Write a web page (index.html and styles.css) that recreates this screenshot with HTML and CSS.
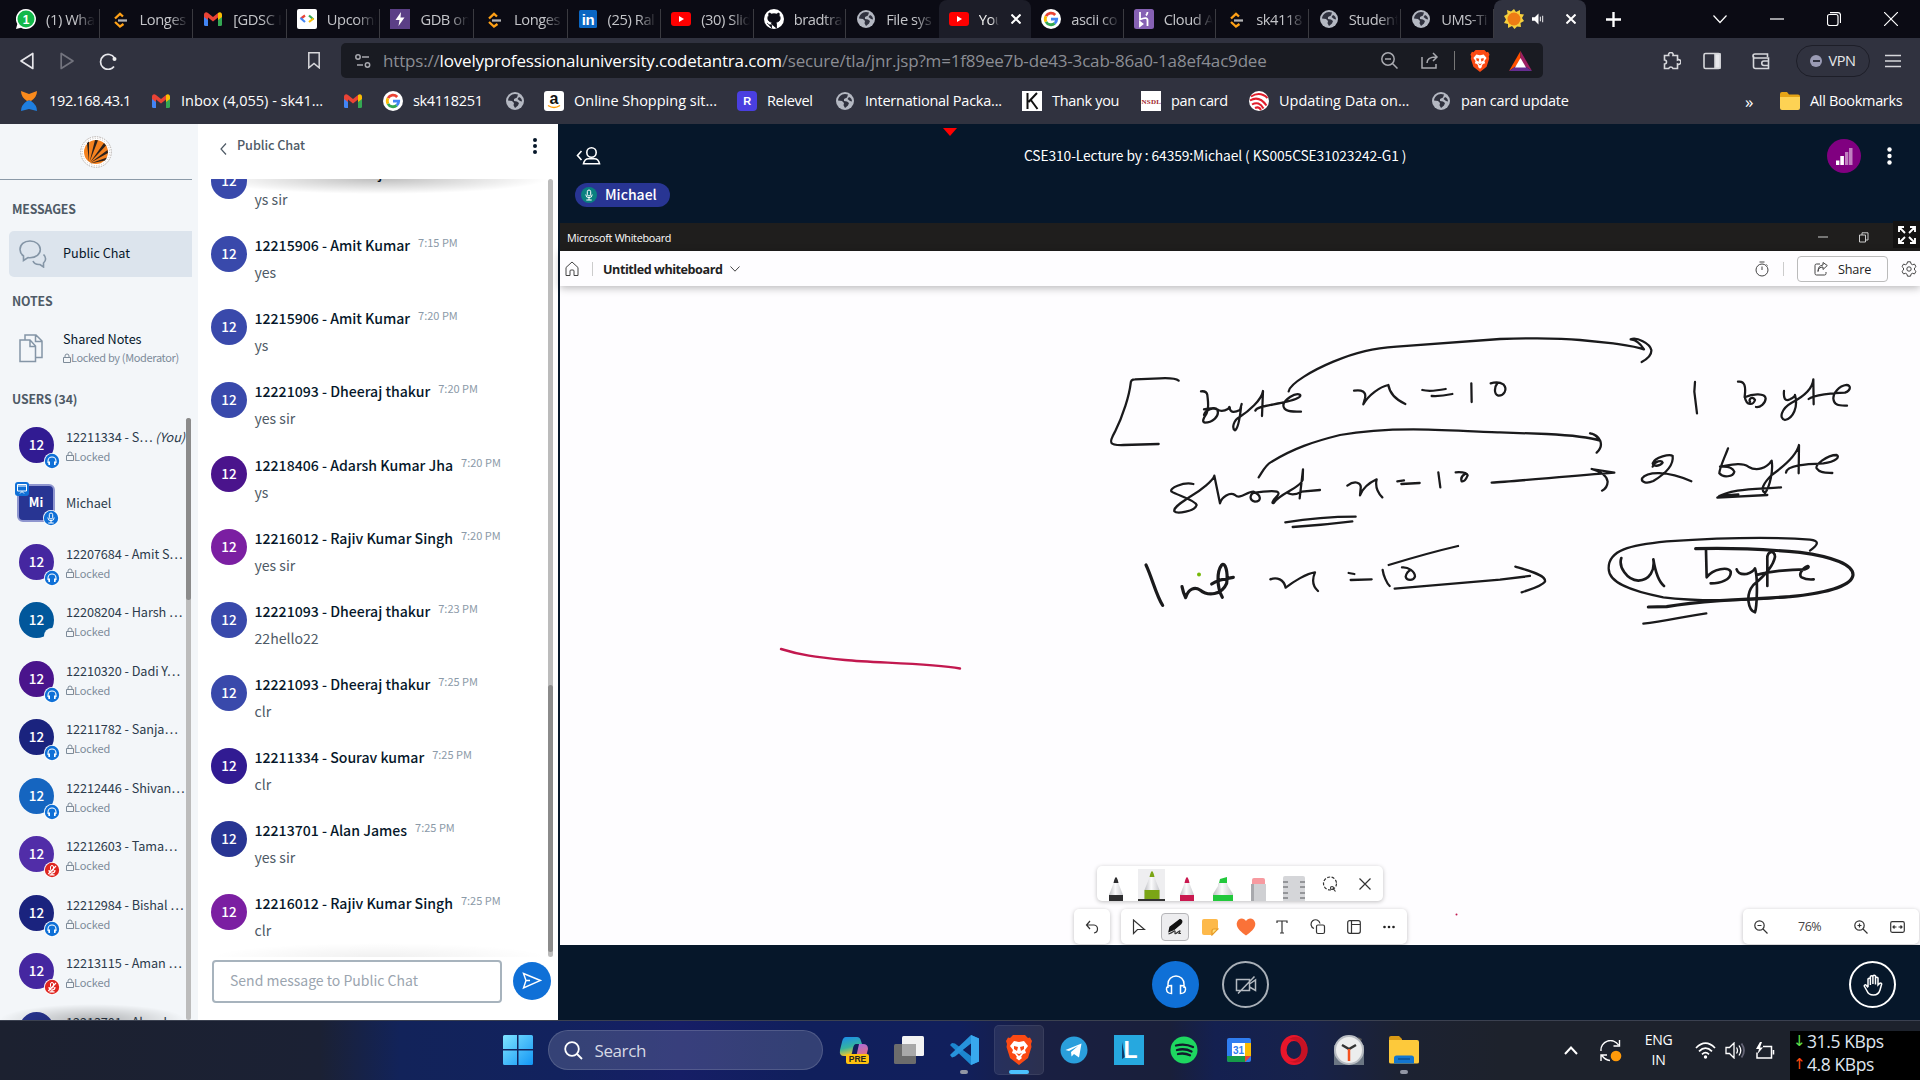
FILE: index.html
```html
<!DOCTYPE html>
<html lang="en">
<head>
<meta charset="utf-8">
<title>CSE310 Lecture</title>
<link rel="stylesheet" href="styles.css">
</head>
<body>
<svg class="sprite" width="0" height="0">
  <linearGradient id="body"><stop stop-color="#bfc0c4"/><stop offset=".45" stop-color="#fbfbfc"/><stop offset="1" stop-color="#c9cace"/></linearGradient>
  <symbol id="globe" viewBox="0 0 18 18"><circle cx="9" cy="9" r="9" fill="#b4b8c2"/><path d="M9 2C5 2 2.400 5 2 8.500L6 9l2 2-.5 2.200L9 16l3-2.500 1-2.500-2-1.500-3-.5V7l3-1.500L12 2.600zM13 5l-1.500 2L14 9l2 .5C16 7 15 6 13 5z" fill="#30323f"/></symbol>
  <symbol id="gmail" viewBox="0 0 18 14"><path d="M0 2.500V12.500Q0 14 1.500 14H4V5z" fill="#4285f4"/><path d="M18 2.500V12.500Q18 14 16.500 14H14V5z" fill="#34a853"/><path d="M0 3C0 .5 2 -.5 4 1L9 5 14 1V5.500L9 9.500 4 5.500V8L0 5z" fill="#ea4335"/><path d="M14 1c2-1.500 4-.5 4 2v2l-4 3z" fill="#fbbc04"/></symbol>
  <symbol id="google" viewBox="0 0 20 20"><circle cx="10" cy="10" r="10" fill="#fff"/><g fill="none" stroke-width="2.800"><path d="M14.200 6A5.700 5.700 0 0 0 5 7.200" stroke="#ea4335"/><path d="M5 7.200A5.700 5.700 0 0 0 5 12.800" stroke="#fbbc05"/><path d="M5 12.800A5.700 5.700 0 0 0 13.700 14.400" stroke="#34a853"/><path d="M13.700 14.400A5.700 5.700 0 0 0 15.700 10.200H10" stroke="#4285f4"/></g></symbol>
  <symbol id="yt" viewBox="0 0 20 14"><rect width="20" height="14" rx="3" fill="#f00"/><path d="M8 4l5 3-5 3z" fill="#fff"/></symbol>
  <symbol id="leet" viewBox="0 0 18 20"><path d="M8.500 1L4 6" stroke="#111" stroke-width="2.500"/><path d="M12 7.500L9 4.800 4 9.500" fill="none" stroke="#ffa116" stroke-width="2.300"/><path d="M4 13l5 4.500 3.500-2.500" fill="none" stroke="#ffa116" stroke-width="2.300"/><path d="M7 11.500h9" stroke="#b3b3b3" stroke-width="2.300"/></symbol>
  <symbol id="lock" viewBox="0 0 8 10"><path d="M.5 4.500h7v5h-7zM2 4.500V3a2 2 0 0 1 4 0v1.500" fill="none" stroke="#7d8b99"/></symbol>
  <symbol id="head" viewBox="0 0 16 16"><circle cx="8" cy="8" r="8" fill="#fff"/><circle cx="8" cy="8" r="7.200" fill="#0f70d7"/><path d="M4 10V8a4 4 0 0 1 8 0v2" fill="none" stroke="#fff" stroke-width="1.100"/><path d="M4 8.500h2V12H4.500zM12 8.500h-2V12h1.500z" fill="#fff"/></symbol>
  <symbol id="micoff" viewBox="0 0 16 16"><circle cx="8" cy="8" r="8" fill="#fff"/><circle cx="8" cy="8" r="7.200" fill="#df2721"/><rect x="6.500" y="3.500" width="3" height="5.500" rx="1.500" fill="none" stroke="#fff"/><path d="M5 8a3 3 0 0 0 6 0M8 11v2M5.500 12.800h5M4.300 12L12 4" fill="none" stroke="#fff" stroke-width="1.200"/></symbol>
  <symbol id="micon" viewBox="0 0 16 16"><rect x="6.300" y="3" width="3.400" height="6" rx="1.700" fill="none" stroke="#fff"/><path d="M4.800 7.500a3.200 3.200 0 0 0 6.400 0M8 11v2M5.300 13h5.400" fill="none" stroke="#fff"/></symbol>
  <symbol id="brave" viewBox="0 0 26 30"><path d="M7 0h12l3 3 2-.5L26 6l-1 3 .5 3-3.500 11L13 30 4 23 .5 12 1 9 0 6l2-3.500L4 3z" fill="#fb4a14"/><path d="M8 6l5 1 5-1 4 5-3 4 1 3-3 1-2 3 1 1-3 2.500L10 23l1-1-2-3-3-1 1-3-3-4z" fill="#fff"/><path d="M8 11l4 1-1 4-3-2zM18 11l-4 1 1 4 3-2zM10 18l3 1 3-1-3 3z" fill="#fb4a14"/></symbol>
</svg>

<header class="browser">
  <div class="tabs">
    <div class="tab w"><svg class="i20" viewBox="0 0 20 20"><path d="M10 0a10 10 0 1 1-5 18.700L0 20l1.300-5A10 10 0 0 1 10 0z" fill="#fff"/><circle cx="10" cy="10" r="8.500" fill="#12b84a"/><text x="10" y="14.500" class="t-one">1</text></svg><span>(1) Wha</span></div>
    <div class="tab w"><svg class="i20"><use href="#leet"/></svg><span>Longes</span></div>
    <div class="tab w"><svg class="i20 m"><use href="#gmail"/></svg><span>[GDSC I</span></div>
    <div class="tab w"><svg class="i20" viewBox="0 0 20 20"><rect width="20" height="20" rx="2" fill="#fff"/><g fill="none" stroke-width="2.200"><path d="M8 6.500L4 9.500" stroke="#ea4335"/><path d="M3.500 9l4.500 4" stroke="#4285f4"/><path d="M12 6.500l4.500 4" stroke="#34a853"/><path d="M16.500 9.500L12 13" stroke="#fbbc04"/></g></svg><span>Upcomi</span></div>
    <div class="tab w"><svg class="i20" viewBox="0 0 20 20"><rect width="20" height="20" fill="#5b3f86"/><path d="M11 3L5.500 11H9.500L8.500 17 14.500 8.500H10.500z" fill="#fff"/></svg><span>GDB on</span></div>
    <div class="tab w"><svg class="i20"><use href="#leet"/></svg><span>Longes</span></div>
    <div class="tab w"><svg class="i20" viewBox="0 0 20 20"><rect x="1" y="1" width="18" height="18" rx="1.500" fill="#0a66c2"/><text x="10" y="16" class="t-in">in</text></svg><span>(25) Ral</span></div>
    <div class="tab"><svg class="i20"><use href="#yt"/></svg><span>(30) Slid</span></div>
    <div class="tab"><svg class="i20" viewBox="0 0 20 20"><circle cx="10" cy="10" r="10" fill="#fff"/><path d="M7.500 19v-3.200C4.500 16.500 4 14.500 3 14M12.500 19v-4l-.6-1.600c3-.5 4.300-2 4.300-4.400 0-1-.5-2-1-2.600.2-.8.200-1.600-.2-2.400-1 0-2 .7-2.500 1.100a9 9 0 0 0-5 0C7 4.600 6 4 5 4c-.4.800-.4 1.600-.2 2.400C4.200 7 3.800 8 3.800 9c0 2.400 1.400 3.900 4.300 4.400L7.500 15z" fill="#0b0b14" stroke="#0b0b14" stroke-width=".8"/></svg><span>bradtra</span></div>
    <div class="tab"><svg class="i20 g"><use href="#globe"/></svg><span>File sys</span></div>
    <div class="tab hover"><svg class="i20"><use href="#yt"/></svg><span>You</span><svg class="close" viewBox="0 0 10 10"><path d="M.5.5l9 9M9.500.5l-9 9"/></svg></div>
    <div class="tab"><svg class="i20"><use href="#google"/></svg><span>ascii co</span></div>
    <div class="tab"><svg class="i20" viewBox="0 0 20 20"><rect width="20" height="20" rx="2.500" fill="#8661b4"/><path d="M6 3v7.500Q14 7 13.500 12v5M6 13v4l2.500-2zM13.500 3q0 2-1.500 3.500" fill="none" stroke="#fff" stroke-width="1.800"/></svg><span>Cloud A</span></div>
    <div class="tab"><svg class="i20"><use href="#leet"/></svg><span>sk4118</span></div>
    <div class="tab"><svg class="i20 g"><use href="#globe"/></svg><span>Student</span></div>
    <div class="tab"><svg class="i20 g"><use href="#globe"/></svg><span>UMS-Ti</span></div>
    <div class="tab active"><svg class="i20" viewBox="0 0 20 20"><path d="M10 0l2 3 4-2v4l4 .5-2 3.500 2 3-3.500 2 .5 4-4-.5-2.500 2.500L8 17l-4 2v-4l-4-1 2-3.500L0 7l3.500-2L3 1l4 1.500z" fill="#f5cf3c"/><circle cx="10" cy="10" r="6.500" fill="#ee7c14"/></svg><svg class="snd" viewBox="0 0 14 12"><path d="M0 4h3l4-4v12L3 8H0z" fill="#fff"/><path d="M9 3.500v5M11.500 2.500v7" stroke="#fff" fill="none"/></svg><svg class="close" viewBox="0 0 10 10"><path d="M.5.5l9 9M9.500.5l-9 9"/></svg></div>
    <svg class="plus" viewBox="0 0 14 14"><path d="M7 0v14M0 7h14"/></svg>
    <div class="winctl">
      <svg viewBox="0 0 14 14"><path d="M.5 3.500l6.500 7 6.500-7"/></svg>
      <svg viewBox="0 0 14 14"><path d="M0 7h14"/></svg>
      <svg viewBox="0 0 14 14"><rect x=".5" y="2.500" width="10.500" height="11" rx="2"/><path d="M3 .7h8q2.500 0 2.500 2.500V11"/></svg>
      <svg viewBox="0 0 14 14"><path d="M0 0l14 14M14 0L0 14"/></svg>
    </div>
  </div>
  <div class="toolbar">
    <div class="nav">
      <svg viewBox="0 0 14 18"><path d="M12.800 1.500v15L1 9z"/></svg>
      <svg class="dim" viewBox="0 0 14 18"><path d="M1.200 1.500v15L13 9z"/></svg>
      <svg class="rel" viewBox="0 0 18 18"><path d="M15 14.500A7.500 7.500 0 1 1 15.500 6"/><circle cx="15.500" cy="7" r="2" fill="#eee" stroke="none"/></svg>
    </div>
    <svg class="bm" viewBox="0 0 12 17"><path d="M.8.800h10.400v15L6 11.500.8 15.800z"/></svg>
    <div class="url">
      <svg class="tune" viewBox="0 0 16 14"><circle cx="3" cy="3" r="2.200"/><path d="M7 3h7M2 11h6"/><circle cx="12.500" cy="11" r="2.200"/></svg>
      <div class="addr">https://<b>lovelyprofessionaluniversity.codetantra.com</b>/secure/tla/jnr.jsp?m=1f89ee7b-de43-3cab-86a0-1a8ef4ac9dee</div>
      <svg class="u1" viewBox="0 0 17 17"><circle cx="7" cy="7" r="6.200"/><path d="M11.500 11.500l5 5M4 7h6"/></svg>
      <svg class="u2" viewBox="0 0 18 17"><path d="M1 5v11h14v-4M6 11q0-6 9-6M12 1l4 4-4 4"/></svg>
      <i></i>
      <svg class="u3"><use href="#brave"/></svg>
      <svg class="u4" viewBox="0 0 23 20"><path d="M11.500 0L0 20l11.500-8z" fill="#ff5000"/><path d="M11.500 0L23 20l-11.500-8z" fill="#9e1f63"/><path d="M0 20h23l-11.500-8z" fill="#662d91"/><path d="M11.500 7L6 16.500h11z" fill="#fff"/></svg>
    </div>
    <div class="ext">
      <svg viewBox="0 0 18 18"><path d="M1.500 3.500h4.200a2.300 2.300 0 1 1 4.300 0h4.500V8a2.300 2.300 0 1 1 0 4v4.500H10a2.300 2.300 0 0 0-4.300 0H1.500V12a2 2 0 1 0 0-4z"/></svg>
      <svg viewBox="0 0 18 18"><rect x="1" y="1.500" width="16" height="15" rx="1.500"/><path d="M12 2h5v14h-5z" fill="#e8e8ec"/></svg>
      <svg viewBox="0 0 18 18"><path d="M15.500 5V2H3a2 2 0 0 0 0 4h13.500v10.500H3.500q-2 0-2-2V4M16.500 9H12a2 2 0 0 0 0 4.500h4.500"/></svg>
      <div class="vpn"><i></i>VPN</div>
      <svg class="menu" viewBox="0 0 18 14"><path d="M1 1.500h16M1 7h16M1 12.500h16"/></svg>
    </div>
  </div>
  <div class="bookmarks">
    <a><svg viewBox="0 0 18 20"><path d="M1 0l8 3 8-3q0 6-6 10-2-1-4 0Q1 6 1 0z" fill="#f98a1c"/><path d="M1 20l8-2 8 2q0-6-6-10-2-1-4 0-6 4-6 10z" fill="#1e7fe0"/></svg><span>192.168.43.1</span></a>
    <a class="wide"><svg class="m"><use href="#gmail"/></svg><span>Inbox (4,055) - sk41...</span></a>
    <a><svg class="m"><use href="#gmail"/></svg></a>
    <a><svg><use href="#google"/></svg><span>sk4118251</span></a>
    <a><svg class="g"><use href="#globe"/></svg></a>
    <a class="wide"><svg viewBox="0 0 20 20"><rect width="20" height="20" rx="3" fill="#fff"/><text x="10" y="13" class="t-a">a</text><path d="M4 14.500q6 4 12 0" fill="none" stroke="#f90" stroke-width="1.500"/></svg><span>Online Shopping sit...</span></a>
    <a><svg viewBox="0 0 20 20"><rect width="20" height="20" rx="4" fill="#4a3fe0"/><text x="10" y="14" class="t-r">R</text></svg><span>Relevel</span></a>
    <a class="mid"><svg class="g"><use href="#globe"/></svg><span>International Packa...</span></a>
    <a><svg viewBox="0 0 20 20"><rect width="20" height="20" fill="#fff"/><path d="M5.500 2v16M15 2L6.500 11M8.500 8.500L15.500 18" fill="none" stroke="#111" stroke-width="2"/></svg><span>Thank you</span></a>
    <a><svg viewBox="0 0 20 20"><rect width="20" height="20" fill="#fff"/><text x="10" y="12.500" textLength="19" class="t-n">NSDL</text></svg><span>pan card</span></a>
    <a class="wide"><svg viewBox="0 0 20 20"><circle cx="10" cy="10" r="10" fill="#fff"/><g fill="none" stroke="#e01e2c" stroke-width="2"><path d="M2 5.500Q11 0 18.500 7M1 9.500q9-5.500 16.500 5M3 13.500q7-4 11.500 4M6 17q4-2 6 2"/></g></svg><span>Updating Data on...</span></a>
    <a class="mid"><svg class="g"><use href="#globe"/></svg><span>pan card update</span></a>
    <span class="more">»</span>
    <a class="all"><svg viewBox="0 0 20 18"><path d="M0 2Q0 0 2 0h5l2 2.500h9q2 0 2 2V15H0z" fill="#e5a416"/><path d="M0 5h20v11q0 2-2 2H2q-2 0-2-2z" fill="#fdd254"/></svg><span>All Bookmarks</span></a>
  </div>
</header>

<main class="app">
  <aside class="side">
    <div class="logo"><svg width="32" height="32" viewBox="0 0 32 32"><circle cx="16" cy="16" r="15.300" fill="#fff" stroke="#b3aca8" stroke-dasharray="1.500 1"/><circle cx="16" cy="16" r="13.600" fill="none" stroke="#c9c3bf" stroke-dasharray="1 1.500"/><circle cx="16" cy="16" r="12" fill="#f5821f"/><path d="M9 26L7 7l2-1.500zM9.500 26L15 4l3 .3zM10 26.500L24 7l2 2.500zM10 27l17.500-13 .5 3zM10 27.500l17-6-2 3z" fill="#2b211c"/></svg></div>
    <h2 class="h-msg">MESSAGES</h2>
    <div class="item pub"><svg width="28" height="28" viewBox="0 0 28 28"><path d="M11 1C5 1 1 4.500 1 9.500c0 3 1.500 5 3.500 6.500v4.500l4.500-3q1 .2 2 .2c6 0 10.300-3.500 10.300-8.200S17 1 11 1zM24.500 14.500c2.500 2.500 3 6 0 8.500v4l-3.500-2.500c-3.500.3-6-1-7-3.500" fill="none" stroke="#8495a6" stroke-width="1.600"/></svg><span>Public Chat</span></div>
    <h2 class="h-notes">NOTES</h2>
    <div class="item notes"><svg width="24" height="29" viewBox="0 0 24 29"><path d="M1 6h10l5.500 6v15.500H1zM11 6v6.500h5.500M6 5.500V1h11l6 6v16.500h-6M16.500 1v6.500H23" fill="none" stroke="#8495a6" stroke-width="1.500"/></svg><div><span>Shared Notes</span><small><svg><use href="#lock"/></svg>Locked by (Moderator)</small></div></div>
    <h2 class="h-users">USERS (34)</h2>
    <div class="users">
      <div class="ulist">
        <div class="user"><div class="av c1">12<svg><use href="#head"/></svg></div><div><p>12211334 - S… <em>(You)</em></p><small><svg><use href="#lock"/></svg>Locked</small></div></div>
        <div class="user"><div class="av sq">Mi<svg viewBox="0 0 16 16"><circle cx="8" cy="8" r="8" fill="#fff"/><circle cx="8" cy="8" r="7.200" fill="#0f70d7"/><use href="#micon"/></svg><svg class="pres" viewBox="0 0 14 14"><rect width="14" height="14" rx="3" fill="#0f70d7"/><path d="M2.500 2.500h9v6.500h-9zM5 11.500l2-2 2 2M2 4h10" fill="none" stroke="#fff"/></svg></div><div><p>Michael</p></div></div>
        <div class="user"><div class="av c2">12<svg><use href="#head"/></svg></div><div><p>12207684 - Amit S…</p><small><svg><use href="#lock"/></svg>Locked</small></div></div>
        <div class="user"><div class="av c3">12<svg viewBox="0 0 16 16"><circle cx="8" cy="8" r="8" fill="#f3f6f9"/></svg></div><div><p>12208204 - Harsh …</p><small><svg><use href="#lock"/></svg>Locked</small></div></div>
        <div class="user"><div class="av c4">12<svg><use href="#head"/></svg></div><div><p>12210320 - Dadi Y…</p><small><svg><use href="#lock"/></svg>Locked</small></div></div>
        <div class="user"><div class="av c5">12<svg><use href="#head"/></svg></div><div><p>12211782 - Sanja…</p><small><svg><use href="#lock"/></svg>Locked</small></div></div>
        <div class="user"><div class="av c6">12<svg><use href="#head"/></svg></div><div><p>12212446 - Shivan…</p><small><svg><use href="#lock"/></svg>Locked</small></div></div>
        <div class="user"><div class="av c7">12<svg><use href="#micoff"/></svg></div><div><p>12212603 - Tama…</p><small><svg><use href="#lock"/></svg>Locked</small></div></div>
        <div class="user"><div class="av c5">12<svg><use href="#head"/></svg></div><div><p>12212984 - Bishal …</p><small><svg><use href="#lock"/></svg>Locked</small></div></div>
        <div class="user"><div class="av c2">12<svg><use href="#micoff"/></svg></div><div><p>12213115 - Aman …</p><small><svg><use href="#lock"/></svg>Locked</small></div></div>
        <div class="user"><div class="av c8"></div><div><p>12213701 - Alan J…</p></div></div>
      </div>
      <div class="ubar"><i></i></div>
    </div>
  </aside>

  <section class="chat">
    <div class="chead"><svg width="7" height="12" viewBox="0 0 7 12"><path d="M6 .5L1 6l5 5.500" fill="none" stroke="#4e5a66" stroke-width="1.200"/></svg><h3>Public Chat</h3><svg width="4" height="16" viewBox="0 0 4 16" fill="#06172a"><circle cx="2" cy="2" r="2"/><circle cx="2" cy="8" r="2"/><circle cx="2" cy="14" r="2"/></svg></div>
    <div class="cbody">
      <div class="msgs">
        <div class="msg"><div class="av m1">12</div><div><p><b>12221093 - Dheeraj thakur</b></p><span>ys sir</span></div></div>
        <div class="msg"><div class="av m1">12</div><div><p><b>12215906 - Amit Kumar</b><time>7:15 PM</time></p><span>yes</span></div></div>
        <div class="msg"><div class="av m1">12</div><div><p><b>12215906 - Amit Kumar</b><time>7:20 PM</time></p><span>ys</span></div></div>
        <div class="msg"><div class="av m1">12</div><div><p><b>12221093 - Dheeraj thakur</b><time>7:20 PM</time></p><span>yes sir</span></div></div>
        <div class="msg"><div class="av c4">12</div><div><p><b>12218406 - Adarsh Kumar Jha</b><time>7:20 PM</time></p><span>ys</span></div></div>
        <div class="msg"><div class="av m2">12</div><div><p><b>12216012 - Rajiv Kumar Singh</b><time>7:20 PM</time></p><span>yes sir</span></div></div>
        <div class="msg"><div class="av m1">12</div><div><p><b>12221093 - Dheeraj thakur</b><time>7:23 PM</time></p><span>22hello22</span></div></div>
        <div class="msg"><div class="av m1">12</div><div><p><b>12221093 - Dheeraj thakur</b><time>7:25 PM</time></p><span>clr</span></div></div>
        <div class="msg"><div class="av c1">12</div><div><p><b>12211334 - Sourav kumar</b><time>7:25 PM</time></p><span>clr</span></div></div>
        <div class="msg"><div class="av c8">12</div><div><p><b>12213701 - Alan James</b><time>7:25 PM</time></p><span>yes sir</span></div></div>
        <div class="msg"><div class="av m2">12</div><div><p><b>12216012 - Rajiv Kumar Singh</b><time>7:25 PM</time></p><span>clr</span></div></div>
      </div>
      <div class="cbar"><i></i></div>
    </div>
    <div class="send"><div class="inp">Send message to Public Chat</div><div class="go"><svg width="20" height="18" viewBox="0 0 20 18"><path d="M1.500 1.500L18.500 8.500 1.500 16l2.500-7.500zM4 8.500h4" fill="none" stroke="#fff" stroke-width="1.400"/></svg></div></div>
  </section>

  <section class="stage">
    <div class="shead">
      <svg class="usr" width="25" height="18" viewBox="0 0 25 18"><path d="M5.500 4L1.500 8.500l4 4.500"/><circle cx="15.500" cy="5.500" r="4.700"/><path d="M7.500 16.700q1-5 5-5h6q4 0 5 5z"/></svg>
      <h1>CSE310-Lecture by : 64359:Michael ( KS005CSE31023242-G1 )</h1>
      <div class="sig"><svg width="17" height="18" viewBox="0 0 17 18" fill="#fff"><path d="M0 13.500h3.400V18H0zM4.300 9h3.600v9H4.300z"/><path d="M9 5h3.300v13H9zM13 1h3.500v17H13z" opacity=".5"/></svg></div>
      <svg width="5" height="18" viewBox="0 0 5 18" fill="#fff"><circle cx="2.500" cy="2.500" r="2.200"/><circle cx="2.500" cy="9" r="2.200"/><circle cx="2.500" cy="15.500" r="2.200"/></svg>
    </div>
    <svg class="tri" width="14" height="8" viewBox="0 0 14 8"><path d="M0 0h14L7 8z" fill="#f00"/></svg>
    <div class="talk"><svg width="16" height="16" viewBox="0 0 16 16"><circle cx="8" cy="8" r="8" fill="#0a8080"/><use href="#micon"/></svg><span>Michael</span></div>
    <div class="wtitle"><span>Microsoft Whiteboard</span>
      <svg class="wmin" width="10" height="10" viewBox="0 0 10 10"><path d="M0 5h10"/></svg>
      <svg class="wres" width="10" height="11" viewBox="0 0 10 11"><path d="M.5 3h6v7h-6zM3 3V.8h6V8H6.500"/></svg>
      <div class="full"><svg width="18" height="18" viewBox="0 0 18 18"><path d="M1 6V1h5M1 1l6 6M12 1h5v5M17 1l-6 6M1 12v5h5M1 17l6-6M17 12v5h-5M17 17l-6-6"/></svg></div>
    </div>
    <div class="wbar">
      <svg class="home" width="14" height="16" viewBox="0 0 14 16"><path d="M1 6.500L7 1l6 5.500V14.500H9V10q0-1-1-1H6q-1 0-1 1v4.500H1z"/></svg><i></i><b>Untitled whiteboard</b><svg class="chev" width="10" height="6" viewBox="0 0 10 6"><path d="M.5.5L5 5.200 9.500.5"/></svg>
      <svg class="timer" width="14" height="16" viewBox="0 0 14 16"><circle cx="7" cy="9" r="6"/><path d="M7 5.500V9M4.500 1h5M11.500 3.500l1 1"/></svg><i class="i2"></i>
      <div class="share"><svg width="14" height="14" viewBox="0 0 14 14"><path d="M6 2H2.500Q1 2 1 3.500v8Q1 13 2.500 13h8q1.500 0 1.500-1.500V10M4 9.500Q4.500 5 9 5V7.500l4.300-4L9 .5V3Q4 3.500 4 9.500z"/></svg>Share</div>
      <svg class="gear" width="16" height="16" viewBox="0 0 16 16"><circle cx="8" cy="8" r="2.200"/><path d="M6.500.8h3l.5 2 1.500.9 2-.6 1.500 2.500L13.500 7v2l1.500 1.400-1.500 2.500-2-.6-1.500.9-.5 2h-3l-.5-2-1.500-.9-2 .6L1 10.400 2.500 9V7L1 5.600l1.500-2.500 2 .6L6 2.800z"/></svg>
    </div>
    <div class="board">
      <svg class="ink" viewBox="560 286 1360 659" width="1360" height="659">
        <g transform="translate(1080 320) scale(.33333)">
          <path d="M296 182Q285 173 240 175L165 178Q152 178 152 190C148 225 130 285 105 335Q90 362 94 368Q98 376 130 375L236 372"/>
          <path d="M363 214Q380 212 382 225C384 245 388 265 380 280C370 295 365 306 375 308C395 308 420 290 412 270C405 258 375 270 372 285M372 268Q395 262 412 268Q425 278 445 266Q450 255 450 268Q455 282 480 270L485 252M483 262C480 290 475 325 465 331C455 325 460 300 480 290C505 275 545 240 549 213L546 288M526 272C530 258 580 255 620 245C650 238 665 230 660 224C645 216 612 240 610 255C610 275 635 275 663 275"/>
          <path d="M626 214C630 190 700 150 760 125C830 95 880 85 950 80L1260 57C1360 54 1440 54 1500 60L1600 70C1640 76 1670 80 1692 88Q1675 60 1652 58C1670 50 1710 70 1714 90Q1716 110 1685 126"/>
          <path d="M822 212C845 208 860 215 855 235L850 253C865 225 900 200 925 195C930 225 950 240 976 252"/>
          <path d="M1027 210Q1050 216 1097 207M1055 228Q1080 230 1117 222M1174 190L1175 246M1232 190Q1255 183 1270 193C1285 210 1270 228 1255 227C1240 222 1244 200 1252 190"/>
          <path d="M536 472C545 460 555 435 575 425C640 385 700 365 780 345C850 332 920 328 1000 328C1080 328 1200 336 1260 337L1400 342C1460 345 1530 352 1560 362Q1545 340 1530 340C1560 345 1575 375 1550 398"/>
          <path d="M340 492C310 485 265 505 275 515C290 525 345 540 350 555C345 575 290 582 283 574C280 560 310 545 330 530C365 510 400 480 403 467L420 550C425 530 450 515 465 525C480 540 500 515 520 515C545 525 545 545 525 545C505 540 510 520 525 518L550 515C590 510 605 515 590 530C575 545 575 552 582 548C600 520 660 505 668 480L669 448L659 535M625 520Q640 528 665 515L720 510"/>
          <path d="M616 607Q720 590 827 590M638 621Q730 615 817 604M802 497C825 480 845 488 842 505L840 526C850 500 875 485 890 478C885 500 895 520 907 532M952 484L972 481M964 492L1019 489M1075 457L1081 502M1127 457Q1160 455 1163 466Q1155 486 1145 484Q1140 470 1155 462M1235 488C1300 484 1450 470 1603 458L1535 447Q1580 460 1583 485Q1582 505 1566 512"/>
          <path class="b" d="M198 735C215 770 230 830 248 856M306 800Q310 820 317 833C325 805 345 800 360 810C385 830 425 825 440 790C445 755 435 725 425 735C410 755 410 800 427 832M395 792Q415 778 460 772"/>
          <path d="M571 778C590 770 612 778 617 803C640 785 680 760 705 757C695 780 700 800 714 813M806 759L823 762M812 780L875 778M908 750C910 765 920 790 929 798M966 742C985 740 1005 755 1005 770C1000 783 980 783 977 770Q980 755 992 750M926 735Q1040 700 1134 678M944 806Q1100 792 1260 779L1350 768M1306 740C1340 750 1400 765 1395 785C1385 800 1350 808 1325 817"/>
        </g>
        <circle cx="1199" cy="574.500" r="2" fill="#76b90a"/>
        <g transform="translate(1480 320) scale(.33333)">
          <path d="M645 186L643 215 651 280M774 185C795 182 798 200 794 230C800 260 820 255 825 240C815 225 805 240 810 245M794 232C820 220 855 220 857 235C857 250 840 263 828 261M912 213C910 235 915 245 930 238Q945 230 945 225C955 260 940 295 915 300C895 295 905 265 935 248C970 230 998 205 1000 178L1001 253M986 237C1000 225 1060 218 1095 218C1115 210 1112 195 1100 195C1075 198 1060 220 1060 235C1062 258 1080 256 1101 257"/>
          <path d="M518 440C525 422 545 420 548 428C540 440 520 440 518 430C525 410 570 402 578 408C582 440 550 465 520 483C500 492 483 487 486 475C500 455 560 450 634 484"/>
          <path d="M744 385C735 410 718 445 718 460C730 475 760 470 763 455C755 435 725 440 720 440C750 435 785 425 805 440C830 455 860 445 875 422C880 450 870 500 855 519C840 510 850 490 875 465C910 440 950 405 957 375L956 460M918 458C920 435 980 432 1030 430C1070 425 1080 410 1070 405C1040 405 1005 435 1010 445C1020 460 1040 458 1057 459M712 533C750 505 830 508 903 502M712 533L862 525M718 528L775 523"/>
          <path class="m" d="M424 714C415 740 440 780 475 782C510 780 525 750 520 718Q530 780 552 798M678 690L680 772C700 745 745 740 752 755C755 780 720 790 692 790M770 748Q775 765 800 762Q820 755 825 745C835 775 830 865 825 877C805 870 795 825 820 795C850 770 880 740 885 710C885 690 860 690 862 720L862 798M830 765C860 755 930 748 975 748Q990 742 984 738C965 745 955 765 965 772Q980 780 1001 778"/>
          <path d="M990 692C1020 670 1015 662 990 659C880 650 700 655 560 664C450 675 385 690 386 745C385 790 460 815 550 832C650 845 830 842 930 830"/>
          <path class="b" d="M647 686C760 682 880 690 960 697C1060 710 1120 735 1119 765C1115 800 1030 820 930 830L720 842Q620 850 560 860L505 861"/>
          <path d="M490 911C550 905 620 888 679 880"/>
        </g>
        <path d="M781 649C800 655 815 657 845 660S930 663 960 668.500" class="red"/>
        <circle cx="1456.500" cy="914.500" r="1" fill="#c2184f"/>
      </svg>
      <div class="pens">
        <div><svg width="16" height="24" viewBox="0 0 16 24"><path d="M8 0L15 18v6H1v-6z" fill="url(#body)"/><path d="M8 0Q9.500 1 10.500 6h-5Q6.500 1 8 0zM1 18h14v6H1z" fill="#2d2d2f"/></svg></div>
        <div class="on"><svg width="16" height="28" viewBox="0 0 16 28"><path d="M8 0L15.500 19v9H.5v-9z" fill="url(#body)"/><path d="M8 0Q9.500 1 10.500 6h-5Q6.500 1 8 0zM.5 19h15v9H.5z" fill="#7ba515"/></svg></div>
        <div><svg width="16" height="24" viewBox="0 0 16 24"><path d="M8 0L15 18v6H1v-6z" fill="url(#body)"/><path d="M8 0Q9.500 1 10.500 6h-5Q6.500 1 8 0zM1 18h14v6H1z" fill="#c9184f"/></svg></div>
        <div><svg width="22" height="24" viewBox="0 0 22 24"><path d="M6 6h9l1 3 5 8v7H1v-7l5-8z" fill="url(#body)"/><path d="M7 6l1-4 7-2v6zM1 18h20v6H1z" fill="#22c83c"/></svg></div>
        <div><svg width="17" height="24" viewBox="0 0 17 24"><rect x="2" y="1" width="13" height="8" rx="2" fill="#f79aa0"/><path d="M1 7h15v17H1z" fill="#cfd0d3"/><path d="M1 7h3v17H1z" fill="#a8a9ad"/></svg></div>
        <div><svg width="22" height="25" viewBox="0 0 22 25"><rect width="22" height="26" rx="2" fill="#d5d6d9"/><path d="M0 6h5M0 11h5M0 17h5M0 22h5M17 6h5M17 11h5M17 17h5M17 22h5" stroke="#55565a" fill="none"/></svg></div>
        <div class="c"><svg width="16" height="16" viewBox="0 0 16 16"><circle cx="8" cy="7.500" r="6.500" stroke-dasharray="3 1.500"/><circle cx="10" cy="12" r="1.500"/><path d="M11.500 13l2 2.500"/></svg></div>
        <div class="c"><svg width="12" height="12" viewBox="0 0 12 12"><path d="M.5.5l11 11M11.500.5l-11 11"/></svg></div>
      </div>
      <div class="undo"><svg width="14" height="14" viewBox="0 0 14 14"><path d="M5 1L1.500 5 5 9M1.500 5H9q3.500.5 3.500 4T9 13"/></svg></div>
      <div class="tools">
        <div><svg width="14" height="16" viewBox="0 0 14 16"><path d="M1.500 1v13.500L5.500 10.500H12.500z"/></svg></div>
        <div class="on"><svg width="16" height="16" viewBox="0 0 16 16"><path d="M13 .5q3 1 1 4L7 10.500l-5 2 1-4.500z" fill="#111" stroke="#111"/><path d="M1.500 15q3-1 5-2.500 2-1.500 1.500 1t3-.5 1 1.500h2"/></svg></div>
        <div><svg width="18" height="18" viewBox="0 0 18 18"><path d="M3 1h12q2 0 2 2v8l-6 6H3q-2 0-2-2V3q0-2 2-2z" fill="#fdb94a" stroke="none"/><path d="M17 11h-4q-2 0-2 2v4z" fill="#ffe07a" stroke="#e79a27"/></svg></div>
        <div><svg width="20" height="18" viewBox="0 0 20 18"><path d="M10 17.500C5 14 0 10 .8 5 2-.5 8-.5 10 3 12-.5 18-.5 19.200 5 20 10 15 14 10 17.500z" fill="#fa7238" stroke="none"/></svg></div>
        <div><svg width="12" height="14" viewBox="0 0 12 14"><path d="M1 3V1h10v2M6 1v12M4 13h4"/></svg></div>
        <div><svg width="16" height="16" viewBox="0 0 16 16"><path d="M4 9.500A4.500 4.500 0 1 1 10 4.500"/><rect x="6.500" y="6" width="8" height="8.500" rx="1.500"/></svg></div>
        <div><svg width="14" height="14" viewBox="0 0 14 14"><rect x=".7" y=".7" width="12.600" height="12.600" rx="2"/><path d="M4.500 1v12M4.500 4.500H13"/></svg></div>
        <div><svg width="12" height="4" viewBox="0 0 12 4"><g fill="#222" stroke="none"><circle cx="1.500" cy="2" r="1.300"/><circle cx="6" cy="2" r="1.300"/><circle cx="10.500" cy="2" r="1.300"/></g></svg></div>
      </div>
      <div class="zoom">
        <svg width="14" height="14" viewBox="0 0 14 14"><circle cx="5.500" cy="5.500" r="4.700"/><path d="M9 9l4.500 4.500M3.500 5.500h4"/></svg><span>76%</span><svg width="14" height="14" viewBox="0 0 14 14"><circle cx="5.500" cy="5.500" r="4.700"/><path d="M9 9l4.500 4.500M3.500 5.500h4M5.500 3.500v4"/></svg><svg width="15" height="12" viewBox="0 0 15 12"><rect x=".7" y=".7" width="13.600" height="10.600" rx="1.500"/><path d="M3 6h3.500M8.500 6H12M4.500 4.500L3 6l1.500 1.500M10.500 4.500L12 6l-1.500 1.500"/></svg>
      </div>
    </div>
    <div class="actions">
      <div class="aud"><svg width="22" height="20" viewBox="0 0 22 20"><path d="M3 13V9a8 8 0 0 1 16 0v4M6.500 10.500v8Q2 18.500 1.500 14.500T6.500 10.500zM15.500 10.500v8q4.500 0 5-4t-5-4z"/></svg></div>
      <div class="cam"><svg width="22" height="20" viewBox="0 0 22 20"><path d="M1.500 4.500h13v11h-13zM14.500 9L20.500 5v10.500L14.500 12M3 18.500L19.500 1.500"/></svg></div>
      <div class="hand"><svg width="20" height="22" viewBox="0 0 20 22"><path d="M5 13V5q1.200-1.500 2.400 0V11M7.400 9V2.500q1.200-1.500 2.500 0V10M9.900 9V2q1.300-1.500 2.600 0v8.500M12.500 9V4q1.300-1.500 2.500 0V11l1.500-1.500q2-1 2.200.5L17 16q-1.500 5-6.500 5T4 17L1.200 12q.5-2 2.300-.5L5 13.500"/></svg></div>
    </div>
  </section>
</main>

<footer class="taskbar">
  <div class="apps">
    <svg class="win" width="30" height="30" viewBox="0 0 30 30"><defs><linearGradient id="wg" x2="1" y2="1"><stop stop-color="#7fe3ff"/><stop offset="1" stop-color="#1296f5"/></linearGradient></defs><path d="M1.500 0H14v14H0V1.500Q0 0 1.500 0zM15.500 0h13Q30 0 30 1.500V14H15.500zM0 15.500h14V30H1.500Q0 30 0 28.500zM15.500 15.500H30v13q0 1.500-1.500 1.500h-13z" fill="url(#wg)"/></svg>
    <div class="search"><svg width="19" height="19" viewBox="0 0 19 19"><circle cx="8" cy="8" r="6.800"/><path d="M13 13l5 5"/></svg>Search</div>
    <div class="app-i"><svg width="30" height="30" viewBox="0 0 30 30"><defs><linearGradient id="cg" x2=".3" y2="1"><stop stop-color="#1a8af0"/><stop offset=".6" stop-color="#35b3a0"/><stop offset="1" stop-color="#f6c92c"/></linearGradient><linearGradient id="cp" x2=".3" y2="1"><stop stop-color="#a06be8"/><stop offset="1" stop-color="#f0706a"/></linearGradient></defs><path d="M7 2h11q3 0 4 4l1 3h-6q-2 0-3 4l-1 5q-1 3-4 3H5q-5 0-4-6L3 7q1-5 4-5z" fill="url(#cg)"/><path d="M20 9h4q5 0 5 5l-2 8q-1 4-5 4h-8q3-1 4-8z" fill="url(#cp)"/><rect x="7" y="19" width="23" height="10" rx="2" fill="#ffc20e"/><text x="18.500" y="27" class="t-pre">PRE</text></svg></div>
    <div class="app-i"><svg width="30" height="30" viewBox="0 0 30 30"><rect y="9" width="22" height="20" rx="1.500" fill="#6c6c6c"/><rect x="8" y="1" width="22" height="20" rx="1.500" fill="#f3f3f3"/><rect x="8" y="9" width="14" height="12" fill="#a9a9a9"/></svg></div>
    <div class="app-i run"><svg width="30" height="30" viewBox="0 0 30 30"><path d="M22 0l8 3.500v23L22 30 3 12 1 10l2-2 3 .5 16 12z" fill="#1c86cf"/><path d="M22 0L3 18l-2 2 2 2.500 3-1L22 8.500z" fill="#2793dc"/><path d="M22 0l8 3.500v23L22 30z" fill="#38a8ee"/><path d="M22 9v12l-8-6z" fill="#101f5c"/></svg></div>
    <div class="app-i cur"><svg width="26" height="30"><use href="#brave"/></svg></div>
    <div class="app-i"><svg width="28" height="28" viewBox="0 0 28 28"><circle cx="14" cy="14" r="13.500" fill="#2a9fdc"/><path d="M5.500 14L21.500 7.500 19 21.500l-5-3.500-2.500 2.500-.5-4.500 7-6-9 5z" fill="#fff"/></svg></div>
    <div class="app-i"><svg width="30" height="30" viewBox="0 0 30 30"><rect width="30" height="30" fill="#26a8df"/><path d="M8 7v17l3-2z" fill="#103a68"/><text x="16.500" y="23" class="t-l">L</text></svg></div>
    <div class="app-i"><svg width="28" height="28" viewBox="0 0 28 28"><circle cx="14" cy="14" r="13.500" fill="#1ed760"/><path d="M6 9.500q9-2.500 17 1.500M7 14q8-2 14.500 1.500M8 18q6.500-1.500 12 1.300" fill="none" stroke="#121a2c" stroke-width="2.300" stroke-linecap="round"/></svg></div>
    <div class="app-i"><svg width="24" height="24" viewBox="0 0 24 24"><rect width="24" height="24" rx="2" fill="#2f7df0"/><path d="M18 5h6v13h-6z" fill="#fbbc04"/><path d="M0 18h18v6H2q-2 0-2-2z" fill="#159a48"/><path d="M18 18h6l-6 6z" fill="#ea4335"/><rect x="5" y="5" width="13" height="13" fill="#fff"/><text x="11.500" y="15.500" class="t-31">31</text></svg></div>
    <div class="app-i"><svg width="30" height="30" viewBox="0 0 30 30"><ellipse cx="15" cy="15" rx="10.500" ry="12" fill="none" stroke="#e8162b" stroke-width="6"/><path d="M10 4Q18-1 24 5q5 5 5 10T24 25q-6 5-14 1 8 2 11-6 2-5 0-10T10 4z" fill="#b0101f" opacity=".6"/></svg></div>
    <div class="app-i"><svg width="30" height="30" viewBox="0 0 30 30"><path d="M0 10h30v20H0z" fill="#6b7683"/><path d="M24 2l4 2-2 4z" fill="#555"/><circle cx="15" cy="15" r="14" fill="#eceded" stroke="#b8bcc2" stroke-width="2"/><path d="M8 10l7 4 7-4" fill="none" stroke="#333" stroke-width="2.500"/><path d="M15 14v12" stroke="#f4511e" stroke-width="2.500"/></svg></div>
    <div class="app-i run"><svg width="30" height="28" viewBox="0 0 30 28"><path d="M0 2Q0 0 2 0h8l3 3v5H0z" fill="#d99a15"/><path d="M0 4h28q2 0 2 2v20q0 1.500-2 1.500H2Q0 27.500 0 26z" fill="#fdc93b"/><path d="M5 27.500V22q0-2.500 2.500-2.500h15Q25 19.500 25 22v5.500z" fill="#1376cf"/><path d="M9 23h12" stroke="#0a4f95" stroke-width="1.500"/></svg></div>
  </div>
  <div class="tray">
    <svg class="up" width="14" height="9" viewBox="0 0 14 9"><path d="M1 8l6-6.500L13 8" stroke-width="2"/></svg>
    <svg class="sync" width="22" height="22" viewBox="0 0 22 22"><path d="M1 11A9.500 9.500 0 0 1 18.500 5M19.500 0v6h-6M10 20.500Q5 20 2 15.500M1 21v-6h6" stroke-width="1.400"/><circle cx="16" cy="16" r="5.300" fill="#ff9a0a" stroke="none"/></svg>
    <div class="lang"><span>ENG</span><span>IN</span></div>
    <svg class="wifi" width="21" height="17" viewBox="0 0 21 17"><path d="M1 6q9.500-9.500 19 0M4 9.300q6.500-6.500 13 0M7 12.300q3.500-3.500 7 0" stroke-width="1.700"/><circle cx="10.500" cy="15" r="1.700" fill="#fff" stroke="none"/></svg>
    <svg class="vol" width="20" height="17" viewBox="0 0 20 17"><path d="M1 5.500h3.500L9 1v15l-4.500-4.500H1zM11.500 5.500q2 3 0 6M14 3.500q3.500 5 0 10" stroke-width="1.300"/><path d="M16.500 1.500q5 7 0 14" stroke="#667"/></svg>
    <svg class="bat" width="20" height="18" viewBox="0 0 20 18"><path d="M8 4.500h8.500V16H2V10.500M18.500 8v4.500" stroke-width="1.500"/><path d="M5 0L1 7h3L2.500 12 8 5.500H5L7 0z" fill="#fff" stroke="none"/></svg>
    <div class="net"><p><i class="dn">↓</i>31.5 KBps</p><p><i class="upr">↑</i>4.8 KBps</p></div>
  </div>
</footer>
</body>
</html>
```
FILE: styles.css
```css
* { box-sizing: border-box; }
body { margin: 0; width: 1920px; height: 1080px; overflow: hidden; display: flex; flex-direction: column; font-family: "Open Sans", "Noto Sans", sans-serif; background: #06172a; }
p, h1, h2, h3 { margin: 0; font-weight: inherit; }
svg { display: block; flex: none; }
.sprite { position: absolute; }
svg text { text-anchor: middle; font-family: "Liberation Sans", sans-serif; font-weight: bold; }
.t-one { font-size: 12px; fill: #fff; }
.t-in { font-size: 15px; fill: #fff; }
.t-a { font-size: 16px; fill: #111; }
.t-r { font-size: 11px; fill: #fff; }
.t-n { font-size: 7px; fill: #a01c28; font-family: "Liberation Serif", serif !important; }
.t-pre { font-size: 8.500px; fill: #222; }
.t-l { font-size: 23px; fill: #fff; }
.t-31 { font-size: 10px; fill: #2f7df0; }

/* browser chrome */
.browser { height: 124px; background: #30323f; flex: none; }
.tabs { height: 38px; background: #0b0b14; display: flex; align-items: center; padding-left: 6px; }
.tab { width: 92.500px; height: 38px; display: flex; align-items: center; padding-left: 10px; flex: none; color: #c4c5c9; font-size: 14.700px; letter-spacing: -.42px; position: relative; }
.tab.w { width: 93.600px; }
.tab::after { content: ""; position: absolute; right: 0; top: 9px; bottom: 0; width: 1px; background: #3a3a40; }
.tab.hover, .tab.active { border-radius: 8px 8px 0 0; }
.tab.hover { background: #1c1d28; color: #eee; }
.tab.active { background: #30323f; }
.tab.hover::after, .tab.active::after, .tab:has(+ .hover)::after { display: none; }
.tab span { margin-left: 10px; width: 49px; line-height: 20px; padding-bottom: 1px; overflow: hidden; white-space: nowrap; -webkit-mask-image: linear-gradient(90deg, #000 60%, transparent); mask-image: linear-gradient(90deg, #000 60%, transparent); }
.tab.hover span { width: 20px; }
.i20 { width: 20px; height: 20px; }
.i20.m { padding: 1px; }
.i20.g { padding: 1px; }
.close { width: 10px; height: 10px; stroke: #fff; stroke-width: 2; position: absolute; right: 10px; }
.snd { width: 13px; height: 12px; margin-left: 8px; }
.plus { width: 15px; height: 15px; margin-left: 20px; stroke: #fff; stroke-width: 2.200; }
.winctl { display: flex; gap: 43px; margin-left: 92px; }
.winctl svg { width: 14px; height: 14px; fill: none; stroke: #fff; stroke-width: 1.200; }
.toolbar { height: 45px; display: flex; align-items: center; padding: 0 18px 0 20px; }
.nav { display: flex; gap: 25.500px; align-items: center; }
.nav svg { width: 14px; height: 18px; fill: none; stroke: #e6e6ea; stroke-width: 1.700; stroke-linejoin: round; }
.nav .dim { stroke: #73747e; }
.nav .rel { width: 18px; }
.bm { width: 12px; height: 17px; margin-left: 191px; fill: none; stroke: #d8d8dc; stroke-width: 1.500; }
.url { margin-left: 21px; width: 1202px; height: 35px; border-radius: 5px; background: #191b22; display: flex; align-items: center; padding-left: 14px; }
.url svg { fill: none; stroke: #a9aab0; stroke-width: 1.500; }
.url .u3, .url .u4 { stroke: none; }
.tune { width: 16px; height: 14px; }
.addr { margin-left: 12px; width: 998px; font-size: 17px; letter-spacing: -.18px; color: #8b8d94; white-space: nowrap; }
.addr b { font-weight: 400; color: #fff; }
.u1 { width: 17px; height: 17px; }
.u2 { width: 18px; height: 17px; margin-left: 23px; }
.url i { width: 1px; height: 19px; background: #777; margin-left: 15px; }
.u3 { width: 20px; height: 22px; margin-left: 15px; }
.u4 { width: 23px; height: 20px; margin-left: 19px; }
.ext { display: flex; align-items: center; margin-left: auto; }
.ext svg { width: 18px; height: 18px; margin-right: 22px; fill: none; stroke: #d6d7db; stroke-width: 1.600; }
.ext svg:nth-child(3) { margin: 0 26px 0 9px; }
.vpn { width: 74px; height: 32px; border: 1px solid #1d1e28; border-radius: 16px; color: #e8e8ea; font-size: 14.500px; letter-spacing: -.4px; display: flex; align-items: center; justify-content: center; gap: 6px; }
.vpn i { width: 12px; height: 12px; border-radius: 50%; background: linear-gradient(#30323f, #30323f) center / 7px 2px no-repeat, #9a9bb4; }
.ext .menu { height: 14px; margin: 0 0 0 14px; }
.bookmarks { height: 36px; display: grid; grid-template-columns: 132px 192px 40px 122px 39px 193px 98px 187px 119px 108px 182px 160px 152px 35px 1fr; padding-left: 19px; align-items: center; color: #fff; font-size: 14.500px; letter-spacing: -.33px; white-space: nowrap; }
.bookmarks a { display: flex; align-items: center; gap: 10px; }
.bookmarks a span { line-height: 20px; padding-bottom: 1px; }
.bookmarks svg { width: 20px; height: 20px; }
.bookmarks svg.m, .bookmarks svg.g { padding: 1px; }
.wide { letter-spacing: 0; }
.mid { letter-spacing: -.23px; }
.more { font-size: 17px; margin-left: 154px; }
.all { grid-column: 15; padding-left: 2px; }

/* meeting app */
.app { height: 896px; display: flex; flex: none; font-family: "Noto Sans CJK SC", "Noto Sans", sans-serif; }
.side { width: 198px; background: #f3f6f9; display: flex; flex-direction: column; color: #06172a; }
.logo { height: 56px; margin-right: 6px; border-bottom: 1px solid #8b9aa8; display: flex; justify-content: center; align-items: center; }
.side h2 { font-size: 12.300px; font-weight: 600; line-height: 20px; color: #4e5a66; padding-left: 12px; letter-spacing: -.15px; }
.h-msg { margin-top: 18.500px; }
.item { display: flex; align-items: center; font-size: 12.700px; line-height: 18px; white-space: nowrap; letter-spacing: -.05px; }
.pub { margin: 12.500px 6px 0 9px; height: 46px; background: #dce4ed; border-radius: 5px 0 0 5px; padding-left: 10px; gap: 16px; }
.pub span { margin-top: -3px; }
.h-notes { margin-top: 13.500px; }
.notes { margin: 13px 0 0 19px; height: 50px; gap: 20px; }
.notes div { display: flex; flex-direction: column; }
.notes span { margin: -1px 0 1px; }
small { display: flex; align-items: center; font-size: 11px; line-height: 17px; color: #7d8b99; letter-spacing: -.1px; }
small svg { width: 8px; height: 10px; }
.notes small { letter-spacing: -.35px; }
.h-users { margin-top: 15px; }
.users { margin-top: 9px; flex: 1; min-height: 0; display: flex; justify-content: space-between; padding-right: 7px; position: relative; }
.users::after { content: ""; position: absolute; left: 0; width: 186px; bottom: 0; height: 16px; background: radial-gradient(farthest-side at 50% 100%, rgba(0,0,0,.28), transparent); }
.ulist { width: 186px; overflow: hidden; padding-top: 9px; }
.user { height: 58.500px; display: flex; gap: 12px; padding-left: 19px; white-space: nowrap; font-size: 12.700px; letter-spacing: -.07px; }
.user > div:last-child { padding-top: 0; }
.user p { line-height: 20px; margin-bottom: 1px; color: #2c3b4c; }
.user small { line-height: 17px; }
.user:nth-child(2) p { margin-top: 8px; }
.av { width: 36px; height: 36px; border-radius: 50%; color: #fff; font-size: 13.500px; line-height: 34px; text-align: center; font-weight: 500; position: relative; flex: none; letter-spacing: 0; }
.user .av { width: 35px; }
.user .av svg { position: absolute; right: -6px; bottom: -6px; width: 16px; height: 16px; }
.user .av .pres { left: -4px; top: -4px; width: 14px; height: 14px; }
.user .sq { border-radius: 6px; background: #283593; width: 38px; height: 38px; margin: -1px -1px 0 -2px; border: 2px solid #8f96cf; font-weight: 700; font-size: 12.500px; line-height: 32px; }
.c1 { background: #311b92; } .c2 { background: #4527a0; } .c3 { background: #01579b; } .c4 { background: #4a148c; }
.c5 { background: #1a237e; } .c6 { background: #1565c0; } .c7 { background: #512da8; } .c8 { background: #283593; }
.m1 { background: #3949ab; } .m2 { background: #7b1fa2; }
.ubar, .cbar { width: 5px; background: #bcbcbc; border-radius: 3px; }
.ubar i { display: block; height: 182px; background: #8b8b8b; border-radius: 3px; }

.chat { width: 362px; background: #fff; display: flex; flex-direction: column; border-right: 2px solid #06172a; }
.chead { height: 55px; display: flex; padding: 19px 21px 0 22px; }
.chead h3 { font-size: 12.700px; font-weight: 500; line-height: 20px; margin: -8px auto 0 10px; color: #4e5a66; letter-spacing: -.1px; }
.chead svg:last-child { margin-top: -5px; }
.cbody { height: 778px; display: flex; justify-content: space-between; padding-right: 5px; position: relative; }
.cbody::before { content: ""; position: absolute; top: 0; left: 13px; width: 336px; height: 15px; background: radial-gradient(farthest-side at 50% 0, rgba(0,0,0,.25), transparent); }
.cbody::after { content: ""; position: absolute; bottom: 0; left: 13px; width: 336px; height: 14px; background: radial-gradient(farthest-side at 50% 100%, rgba(0,0,0,.06), transparent); }
.msgs { flex: 1; overflow: hidden; padding-left: 13px; }
.msg { display: flex; gap: 7.500px; height: 73.150px; font-size: 14.100px; color: #4e5a66; }
.msg:first-child { margin-top: -16px; }
.msg p { display: flex; gap: 8px; line-height: 20px; color: #06172a; margin: -1px 0 7px; }
.msg b { font-weight: 500; }
.msg span { display: block; line-height: 20px; }
.msg time { font-size: 11px; line-height: 15px; color: #8b9aa8; }
.cbar { padding-top: 506px; }
.cbar i { display: block; height: 267px; background: #8b8b8b; border-radius: 3px; }
.send { display: flex; gap: 11px; padding: 3px 0 0 14px; }
.inp { width: 290px; height: 43px; border: 2px solid #a7b3bd; border-radius: 4px; padding-left: 16px; line-height: 37px; font-size: 14px; color: #9ba5af; }
.go { width: 38px; height: 38px; margin-top: 2px; border-radius: 50%; background: #0f70d7; display: flex; align-items: center; justify-content: center; }

.stage { flex: 1; background: #06172a; display: flex; flex-direction: column; position: relative; color: #fff; }
.shead { display: flex; align-items: center; height: 62px; padding: 1px 28px 0 16px; }
.usr { fill: none; stroke: #fff; stroke-width: 1.600; }
.shead h1 { flex: 1; margin: -1px 0 0 423px; font-size: 13.800px; letter-spacing: -.1px; white-space: nowrap; }
.sig { width: 34px; height: 34px; border-radius: 50%; background: purple; display: flex; align-items: center; justify-content: center; margin-right: 26px; }
.tri { position: absolute; left: 383px; top: 4px; }
.talk { margin: -3px 0 16px 15px; width: 95px; height: 24px; border-radius: 12px; background: #283593; display: flex; align-items: center; gap: 8px; padding-left: 6px; font-size: 14px; font-weight: 500; }
.talk span { line-height: 20px; margin-top: -3px; }
.wtitle { height: 28px; background: #1f1e1d; display: flex; align-items: center; padding-left: 7px; font-family: "Open Sans", sans-serif; font-size: 10.800px; letter-spacing: -.28px; }
.wtitle svg { fill: none; stroke: #ccc; }
.wmin { margin-left: auto; }
.wres { margin: 0 24px 0 31px; }
.full { width: 27px; height: 27px; background: #141312; margin-top: -5px; display: flex; align-items: center; justify-content: center; }
.wtitle .full svg { stroke: #fff; stroke-width: 1.900; }
.wbar { height: 35px; background: #fefdff; display: flex; align-items: center; padding: 1px 3px 0 5px; font-family: "Open Sans", sans-serif; color: #222; z-index: 1; box-shadow: 0 2px 8px rgba(0,0,0,.28); }
.wbar svg { fill: none; stroke: #444; }
.wbar i { width: 1px; height: 14px; background: #ccc; margin: 0 10px 0 13px; }
.wbar b { font-size: 12.600px; font-weight: 700; letter-spacing: -.45px; }
.chev { margin-left: 8px; }
.timer { margin-left: auto; }
.wbar .i2 { margin: 0 13px 0 14px; }
.share { width: 91px; height: 26px; border: 1px solid #bbb; border-radius: 4px; display: flex; align-items: center; gap: 10px; padding-left: 16px; font-size: 12.700px; letter-spacing: -.2px; margin-right: 13px; }
.board { flex: none; height: 659px; background: #fefdff; position: relative; }
.ink path { fill: none; stroke: #1a1a1c; stroke-width: 6.800; stroke-linecap: round; stroke-linejoin: round; }
.ink path.m { stroke-width: 8; }
.ink path.b { stroke-width: 9.500; }
.ink path.red { stroke: #c2184f; stroke-width: 2.400; }
.pens, .undo, .tools, .zoom { position: absolute; background: #fff; border-radius: 5px; box-shadow: 0 1px 4px rgba(0,0,0,.25); display: flex; height: 35px; }
.pens { left: 537px; top: 580px; width: 286px; padding-left: 1px; overflow: hidden; }
.pens div { width: 35.800px; display: flex; justify-content: center; align-items: flex-end; }
.pens .c { align-items: center; }
.pens .c svg, .undo svg, .tools svg, .zoom svg { fill: none; stroke: #333; stroke-width: 1.200; }
.pens .on { width: 28px; margin: 3px 4px 0; background: #eeeef0; border-bottom: 2px solid #333; }
.undo { left: 514px; top: 623px; width: 36px; align-items: center; justify-content: center; }
.tools { left: 561px; top: 623px; width: 286px; align-items: center; }
.tools div { width: 35.800px; height: 28px; display: flex; align-items: center; justify-content: center; flex: none; }
.tools .on { width: 28px; margin: 0 3.900px; background: #ededef; border: 1px solid #b5b5b8; border-radius: 4px; }
.zoom { left: 1183px; top: 623px; width: 176px; align-items: center; padding-left: 11px; color: #444; font: 12.500px "Open Sans", sans-serif; }
.zoom span { width: 25px; margin: 0 31px 0 30px; letter-spacing: -.5px; white-space: nowrap; }
.zoom svg:last-child { margin-left: 22px; }
.actions { height: 75px; position: relative; display: flex; align-items: center; padding: 4px 24px 0 592px; }
.actions div { width: 47px; height: 47px; border-radius: 50%; display: flex; align-items: center; justify-content: center; }
.actions svg { fill: none; stroke: #fff; stroke-width: 1.500; }
.aud { background: #0f70d7; margin-right: 23px; }
.cam { border: 2.500px solid #a9b0b8; }
.actions .cam svg { stroke: #b4bac1; }
.hand { border: 2.500px solid #fff; margin-left: auto; }

/* desktop taskbar */
.taskbar { height: 60px; border-top: 1px solid #3b4150; display: flex; justify-content: space-between; align-items: center; padding-left: 502.500px; background: linear-gradient(90deg, #1c2130 0, #1b2134 320px, #12235a 400px, #12225e 560px, #161e66 680px, #101f5c 800px, #111f5c 960px, #191f42 1040px, #191f3a 1170px, #142050 1215px, #17224a 1310px, #1c2232 1400px, #1d222c 1500px, #1d222c 100%); }
.apps { display: flex; align-items: center; margin-top: -1px; }
.search { width: 275px; height: 40px; margin: 0 4px 0 15px; border-radius: 20px; background: rgba(255,255,255,.15); border: 1px solid rgba(255,255,255,.14); display: flex; align-items: center; gap: 12px; padding-left: 15px; color: #d6d9e4; font-size: 17px; letter-spacing: -.4px; }
.search svg, .tray svg { fill: none; stroke: #fff; stroke-width: 1.800; }
.app-i { width: 50px; height: 50px; margin-right: 5px; display: flex; align-items: center; justify-content: center; border-radius: 5px; position: relative; }
.cur { background: rgba(255,255,255,.08); border: 1px solid rgba(255,255,255,.07); }
.run::after, .cur::after { content: ""; position: absolute; bottom: 1px; width: 8px; height: 4px; border-radius: 2px; background: #9297a5; }
.cur::after { width: 20px; background: #4cc2ff; bottom: 0; }
.search + .app-i { margin-left: 2px; }
.tray { display: flex; align-items: center; color: #fff; }
.up { margin-right: 22px; }
.lang { margin: -1px 22px 0; width: 29px; display: flex; flex-direction: column; align-items: center; font-size: 14px; line-height: 20px; letter-spacing: -.3px; }
.wifi { margin-right: 9px; }
.vol { margin-right: 10px; }
.bat { margin-right: 15px; }
.net { width: 130px; height: 49px; margin-top: 9px; background: #000; padding-left: 3px; font-size: 17.500px; line-height: 23px; letter-spacing: -.4px; color: #dfe4ee; }
.net p { display: flex; gap: 2px; white-space: nowrap; position: relative; top: -1px; }
.net i { width: 12px; font-style: normal; font-family: "DejaVu Sans", sans-serif; font-size: 15px; }
.dn { color: #5fe04a; }
.upr { color: #ff4a10; }
```
